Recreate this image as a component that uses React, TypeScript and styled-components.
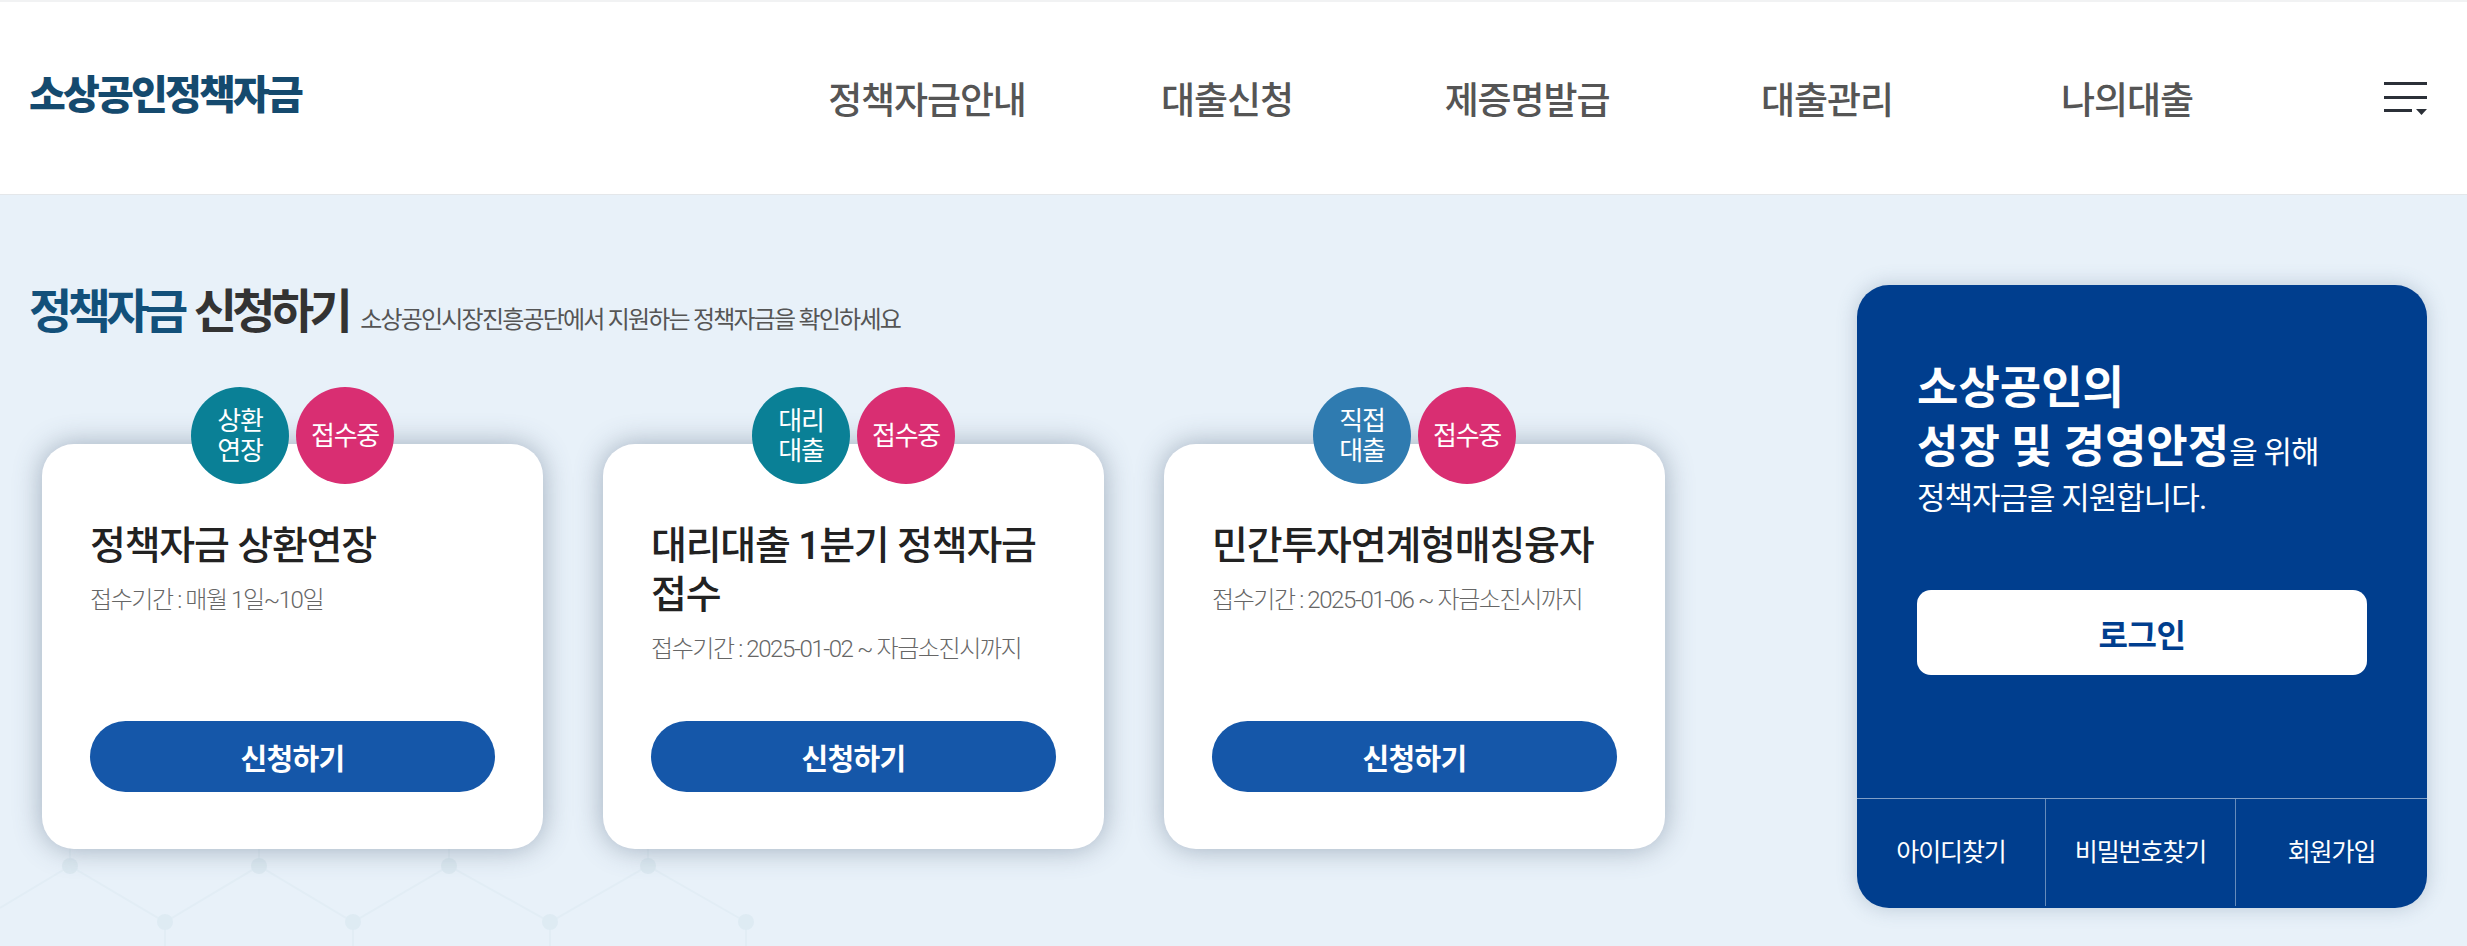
import { createGlobalStyle } from "styled-components";
import styled from "styled-components";

const GlobalStyle = createGlobalStyle`
	html, body {
		margin: 0;
		padding: 0;
		background: #e8f1f9;
	}
	body {
		font-family: Roboto, "Noto Sans CJK KR", sans-serif;
		overflow: hidden;
	}
	* {
		box-sizing: border-box;
	}
`;

const Page = styled.div`
	width: 2467px;
	height: 946px;
	overflow: hidden;
	display: flex;
	flex-direction: column;
`;

const Header = styled.header`
	height: 195px;
	flex: none;
	background: #fff;
	border-top: 2px solid #f1f2f3;
	border-bottom: 1px solid #e4e7ea;
	display: flex;
	align-items: center;
	padding: 0 40px 0 29px;
`;

const Logo = styled.div`
	width: 748px;
	font-size: 40px;
	font-weight: 900;
	letter-spacing: -2.8px;
	color: #154a6e;
	margin-top: -12px;
	white-space: nowrap;
`;

const Nav = styled.nav`
	display: grid;
	grid-template-columns: repeat(5, 300px);
`;

const NavItem = styled.a`
	text-align: center;
	font-size: 37px;
	font-weight: 500;
	letter-spacing: -1.1px;
	color: #555;
`;

const MenuButton = styled.button`
	margin-left: auto;
	padding: 0;
	border: 0;
	background: none;
	display: block;
	height: 36px;
`;

const Main = styled.main`
	position: relative;
	flex: 1;
	display: flex;
	justify-content: space-between;
	padding: 90px 40px 0 29px;
`;

const Pattern = styled.svg`
	position: absolute;
	left: 0;
	top: 0;
`;

const Left = styled.section`
	position: relative;
`;

const Heading = styled.div`
	display: flex;
	align-items: baseline;
	gap: 12px;
	height: 70px;
	margin-top: -10px;
	white-space: nowrap;
`;

const HeadingTitle = styled.h2`
	margin: 0;
	font-size: 47px;
	line-height: 74px;
	font-weight: 700;
	letter-spacing: -4.6px;
	word-spacing: 3px;
	color: #333;

	em {
		font-style: normal;
		color: #12507a;
	}
`;

const HeadingSub = styled.span`
	font-size: 24px;
	font-weight: 400;
	letter-spacing: -1.8px;
	color: #555;
`;

const Cards = styled.div`
	display: flex;
	gap: 60px;
	margin: 99px 0 0 13px;
`;

const Card = styled.article`
	position: relative;
	width: 501px;
	height: 405px;
	background: #fff;
	border-radius: 32px;
	box-shadow: 0 0 28px rgba(70, 90, 115, 0.45);
	padding: 78px 48px 57px 48px;
	display: flex;
	flex-direction: column;
`;

const Badges = styled.div`
	position: absolute;
	top: -57px;
	left: 149px;
	display: flex;
	gap: 7px;
`;

const Badge = styled.span<{ $color: string }>`
	width: 98px;
	height: 97px;
	border-radius: 50%;
	background: ${({ $color }) => $color};
	color: #fff;
	display: flex;
	align-items: center;
	justify-content: center;
	text-align: center;
	font-size: 26px;
	line-height: 30px;
	letter-spacing: -1.2px;
`;

const CardTitle = styled.h3`
	margin: 0;
	font-size: 39px;
	line-height: 49px;
	font-weight: 500;
	letter-spacing: -1.2px;
	color: #222;
`;

const Period = styled.p`
	margin: 12px 0 0;
	font-size: 24px;
	line-height: 34px;
	font-weight: 300;
	letter-spacing: -1.4px;
	color: #666;
`;

const ApplyButton = styled.a`
	margin-top: auto;
	height: 71px;
	flex: none;
	border-radius: 36px;
	background: #1557a9;
	color: #fff;
	display: flex;
	align-items: center;
	justify-content: center;
	font-size: 29px;
	font-weight: 700;
	letter-spacing: -0.7px;
`;

const Panel = styled.aside`
	position: relative;
	width: 570px;
	height: 623px;
	background: #003e8e;
	border-radius: 32px;
	box-shadow: 0 0 20px rgba(80, 105, 135, 0.3);
	color: #fff;
	display: flex;
	flex-direction: column;
`;

const PanelBody = styled.div`
	flex: 1;
	padding: 74px 60px 0 60px;
`;

const PanelText = styled.p`
	margin: 0;
	font-size: 31px;
	line-height: 44px;
	letter-spacing: -1px;

	strong {
		font-size: 45px;
		line-height: 59px;
		font-weight: 700;
		letter-spacing: 0;
	}
`;

const LoginButton = styled.a`
	margin-top: 69px;
	width: 450px;
	height: 85px;
	border-radius: 14px;
	background: #fff;
	color: #003e8e;
	display: flex;
	align-items: center;
	justify-content: center;
	font-size: 32px;
	font-weight: 700;
	letter-spacing: -0.4px;
`;

const PanelFooter = styled.div`
	height: 110px;
	flex: none;
	border-top: 1px solid rgba(255, 255, 255, 0.5);
	display: grid;
	grid-template-columns: 189px 190px 1fr;
	padding-bottom: 2px;
`;

const FooterLink = styled.a`
	display: flex;
	align-items: center;
	justify-content: center;
	padding-bottom: 6px;
	font-size: 25px;
	letter-spacing: -1.1px;
	color: #fff;
	border-right: 1px solid rgba(255, 255, 255, 0.4);

	&:last-child {
		border-right: 0;
	}
`;

const nodesTop = [70, 259, 449, 648];
const nodesBottom = [165, 353, 550, 746];

const NetPattern = () => {
	const tops = nodesTop.map(x => ({ x, y: 671 }));
	const bottoms = nodesBottom.map(x => ({ x, y: 727 }));
	const points = [
		{ x: 0, y: 713 },
		tops[0], bottoms[0], tops[1], bottoms[1], tops[2], bottoms[2], tops[3], bottoms[3]
	];
	return (
		<Pattern width="800" height="751" viewBox="0 0 800 751" fill="none">
			<polyline
				points={points.map(p => `${p.x},${p.y}`).join(" ")}
				stroke="#e2edf5"
				strokeWidth="2"
			/>
			{tops.map(p => (
				<g key={p.x}>
					<line x1={p.x} y1={p.y - 20} x2={p.x} y2={p.y} stroke="#e2edf5" strokeWidth="2" />
					<circle cx={p.x} cy={p.y} r="8" fill="#dce9f1" />
				</g>
			))}
			{bottoms.map(p => (
				<g key={p.x}>
					<line x1={p.x} y1={p.y} x2={p.x} y2={p.y + 24} stroke="#e2edf5" strokeWidth="2" />
					<circle cx={p.x} cy={p.y} r="8" fill="#deebf3" />
				</g>
			))}
		</Pattern>
	);
};

const cards = [
	{
		kind: ["상환", "연장"],
		color: "#0a8096",
		title: "정책자금 상환연장",
		period: "접수기간 : 매월 1일~10일"
	},
	{
		kind: ["대리", "대출"],
		color: "#0a8096",
		title: "대리대출 1분기 정책자금 접수",
		period: "접수기간 : 2025-01-02 ~ 자금소진시까지"
	},
	{
		kind: ["직접", "대출"],
		color: "#2f7bb0",
		title: "민간투자연계형매칭융자",
		period: "접수기간 : 2025-01-06 ~ 자금소진시까지"
	}
];

const App = () => (
	<Page>
		<GlobalStyle />
		<Header>
			<Logo>소상공인정책자금</Logo>
			<Nav>
				<NavItem>정책자금안내</NavItem>
				<NavItem>대출신청</NavItem>
				<NavItem>제증명발급</NavItem>
				<NavItem>대출관리</NavItem>
				<NavItem>나의대출</NavItem>
			</Nav>
			<MenuButton aria-label="menu">
				<svg width="43" height="36" viewBox="0 0 43 36" fill="none">
					<rect x="0" y="2" width="43" height="3" fill="#2b3038" />
					<rect x="0" y="16" width="43" height="3" fill="#2b3038" />
					<rect x="0" y="29" width="28" height="3" fill="#2b3038" />
					<path d="M32 29h11l-5.500 6z" fill="#2b3038" />
				</svg>
			</MenuButton>
		</Header>
		<Main>
			<NetPattern />
			<Left>
				<Heading>
					<HeadingTitle><em>정책자금</em> 신청하기</HeadingTitle>
					<HeadingSub>소상공인시장진흥공단에서 지원하는 정책자금을 확인하세요</HeadingSub>
				</Heading>
				<Cards>
					{cards.map(card => (
						<Card key={card.title}>
							<Badges>
								<Badge $color={card.color}>{card.kind[0]}<br />{card.kind[1]}</Badge>
								<Badge $color="#d92e72">접수중</Badge>
							</Badges>
							<CardTitle>{card.title}</CardTitle>
							<Period>{card.period}</Period>
							<ApplyButton>신청하기</ApplyButton>
						</Card>
					))}
				</Cards>
			</Left>
			<Panel>
				<PanelBody>
					<PanelText>
						<strong>소상공인의<br />성장 및 경영안정</strong>을 위해<br />정책자금을 지원합니다.
					</PanelText>
					<LoginButton>로그인</LoginButton>
				</PanelBody>
				<PanelFooter>
					<FooterLink>아이디찾기</FooterLink>
					<FooterLink>비밀번호찾기</FooterLink>
					<FooterLink>회원가입</FooterLink>
				</PanelFooter>
			</Panel>
		</Main>
	</Page>
);

export default App;
